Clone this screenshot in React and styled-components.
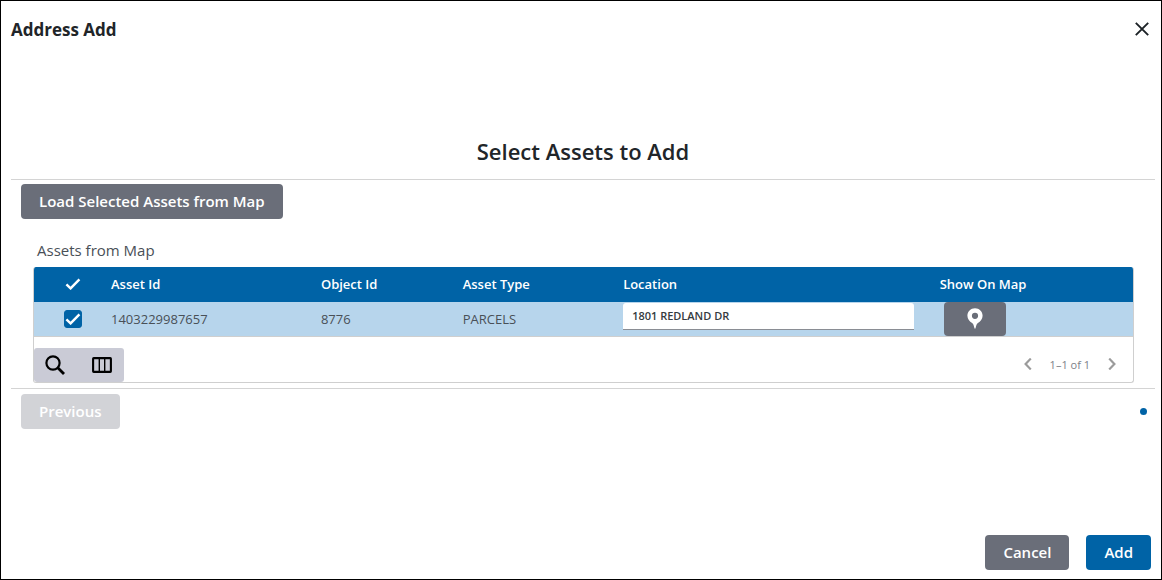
import React, { useState } from "react";
import styled, { createGlobalStyle } from "styled-components";

const assets = [
  {
    assetId: "1403229987657",
    objectId: "8776",
    type: "PARCELS",
    location: "1801 REDLAND DR",
  },
];

const CloseIcon = () => (
  <svg width="14" height="14" viewBox="0 0 14 14" fill="none" stroke="#1c2226" strokeWidth="1.9">
    <path d="M0.8 0.8l12.4 12.4M13.2 0.8L0.8 13.2" />
  </svg>
);

const CheckIcon = () => (
  <svg width="16" height="12" viewBox="0 0 16 12" fill="none" stroke="#fff" strokeWidth="2.4">
    <path d="M1.4 6.4l4.2 4L14.4 1.3" />
  </svg>
);

const SearchIcon = () => (
  <svg width="20" height="20" viewBox="0 0 20 20" fill="none" stroke="#000" strokeWidth="2.2">
    <circle cx="8" cy="8" r="6.6" />
    <path d="M12.8 12.8L19 19" strokeWidth="2.8" />
  </svg>
);

const ColumnsIcon = () => (
  <svg width="20" height="16" viewBox="0 0 20 16" fill="none" stroke="#000">
    <rect x="1.1" y="1.1" width="17.8" height="13.8" rx="0.6" strokeWidth="2.1" />
    <path d="M7.3 2v12M12.7 2v12" strokeWidth="1.4" />
  </svg>
);

const PinIcon = () => (
  <svg width="16" height="21" viewBox="0 0 16 21" fill="#fff" fillRule="evenodd">
    <path d="M8 0.3C3.7 0.3 0.4 3.6 0.4 7.8c0 3.4 2.2 5.7 4.7 7.1 1.2 0.7 1.7 2.5 2.3 5.2 0.2 0.7 1 0.7 1.2 0 0.6-2.7 1.1-4.5 2.3-5.2 2.5-1.4 4.7-3.7 4.7-7.1C15.6 3.6 12.3 0.3 8 0.3zM8 4.7a3.1 3.1 0 1 1 0 6.2 3.1 3.1 0 0 1 0-6.2z" />
  </svg>
);

const ChevronIcon = ({ d }) => (
  <svg width="8" height="12" viewBox="0 0 8 12" fill="none" stroke="#9b9b9b" strokeWidth="2.2">
    <path d={d} />
  </svg>
);

const App = () => {
  const [selected, setSelected] = useState(true);

  return (
    <Dialog role="dialog" aria-labelledby="dialog-title">
      <GlobalStyle />
      <Header>
        <Title id="dialog-title">Address Add</Title>
        <CloseButton type="button" aria-label="Close">
          <CloseIcon />
        </CloseButton>
      </Header>

      <Content>
        <StepTitle>Select Assets to Add</StepTitle>
        <Step>
          <Button type="button">Load Selected Assets from Map</Button>
          <GridSection>
            <GridLabel id="grid-label">Assets from Map</GridLabel>
            <Grid>
              <Table aria-labelledby="grid-label">
                <thead>
                  <tr>
                    <HeadCell $width="69px" $center aria-label="Selected">
                      <CheckIcon />
                    </HeadCell>
                    <HeadCell $width="19.1%">Asset Id</HeadCell>
                    <HeadCell $width="12.9%">Object Id</HeadCell>
                    <HeadCell $width="14.6%">Asset Type</HeadCell>
                    <HeadCell $width="28.8%">Location</HeadCell>
                    <HeadCell>Show On Map</HeadCell>
                  </tr>
                </thead>
                <tbody>
                  {assets.map((asset) => (
                    <Row key={asset.assetId}>
                      <Cell $center>
                        <CheckBox>
                          <input
                            type="checkbox"
                            aria-label={`Select ${asset.assetId}`}
                            checked={selected}
                            onChange={() => setSelected(!selected)}
                          />
                          {selected && <CheckIcon />}
                        </CheckBox>
                      </Cell>
                      <Cell>{asset.assetId}</Cell>
                      <Cell>{asset.objectId}</Cell>
                      <Cell>{asset.type}</Cell>
                      <Cell $top>
                        <LocationInput aria-label="Location" defaultValue={asset.location} />
                      </Cell>
                      <Cell>
                        <MapButton type="button" aria-label="Show on map">
                          <PinIcon />
                        </MapButton>
                      </Cell>
                    </Row>
                  ))}
                </tbody>
              </Table>
              <GridFooter>
                <Tools>
                  <IconButton type="button" aria-label="Search">
                    <SearchIcon />
                  </IconButton>
                  <IconButton type="button" aria-label="Columns">
                    <ColumnsIcon />
                  </IconButton>
                </Tools>
                <Pager>
                  <IconButton type="button" aria-label="Previous page">
                    <ChevronIcon d="M6.8 0.6L1.6 6l5.2 5.4" />
                  </IconButton>
                  <span>1–1 of 1</span>
                  <IconButton type="button" aria-label="Next page">
                    <ChevronIcon d="M1.2 0.6L6.4 6l-5.2 5.4" />
                  </IconButton>
                </Pager>
              </GridFooter>
            </Grid>
          </GridSection>
        </Step>
        <StepNav>
          <Button type="button" disabled>
            Previous
          </Button>
          <StepDot />
        </StepNav>
      </Content>

      <Actions>
        <Button type="button">Cancel</Button>
        <Button type="button" $primary>
          Add
        </Button>
      </Actions>
    </Dialog>
  );
};

const GlobalStyle = createGlobalStyle`
  * {
    box-sizing: border-box;
  }

  body {
    margin: 0;
    background: #fff;
    color: #212529;
    font-family: "Open Sans", "Noto Sans", sans-serif;
  }

  button, input {
    font-family: inherit;
  }

  svg {
    display: block;
    flex: none;
  }
`;

const Dialog = styled.div`
  display: flex;
  flex-direction: column;
  min-height: 100vh;
  border: 1px solid #000;
`;

const Header = styled.header`
  display: flex;
  align-items: center;
  justify-content: space-between;
  height: 57px;
  padding: 0 8px 0 10px;
`;

const Title = styled.h1`
  margin: 0;
  font-size: 17px;
  font-weight: 700;
  line-height: 24px;
`;

const CloseButton = styled.button`
  padding: 4px 4px 6px;
  border: 0;
  background: none;
  cursor: pointer;
`;

const Content = styled.main`
  flex: 1;
  padding: 77px 6px 0 10px;
`;

const StepTitle = styled.h2`
  margin: 0;
  font-size: 22px;
  font-weight: 600;
  line-height: 32px;
  text-align: center;
`;

const Step = styled.section`
  margin-top: 12px;
  padding: 4px 10px 5px;
  border-top: 1px solid #d4d4d4;
  border-bottom: 1px solid #d4d4d4;
`;

const Button = styled.button`
  height: 35px;
  padding: 0 18px 1px;
  border: 0;
  border-radius: 4px;
  background: ${(props) => (props.$primary ? "#0063a6" : "#6a6e79")};
  color: #fff;
  font-size: 15px;
  font-weight: 600;
  line-height: 24px;
  cursor: pointer;

  &:disabled {
    background: #d2d3d7;
    cursor: default;
  }
`;

const GridSection = styled.div`
  padding: 19px 11px 0 12px;
`;

const GridLabel = styled.div`
  padding: 0 4px 5px;
  color: #495057;
  font-size: 15px;
  line-height: 24px;
`;

const Grid = styled.div`
  border: 1px solid #cfcfcf;
  border-top: 0;
  border-radius: 3px;
  overflow: hidden;
`;

const Table = styled.table`
  width: 100%;
  table-layout: fixed;
  border-collapse: separate;
  border-spacing: 0;
  font-size: 13px;
  line-height: 20px;
`;

const HeadCell = styled.th`
  width: ${(props) => props.$width || "auto"};
  height: 35px;
  padding: ${(props) => (props.$center ? "0 0 1px 8px" : "0 8px 1px")};
  background: #0063a6;
  color: #fff;
  font-weight: 600;
  text-align: left;

  svg {
    margin: 0 auto;
  }
`;

const Row = styled.tr`
  background: #b7d5ec;
`;

const Cell = styled.td`
  height: 35px;
  padding: ${(props) => (props.$center ? "0 0 0 8px" : "0 8px")};
  padding-top: ${(props) => (props.$top ? "1px" : "0")};
  border-bottom: 1px solid #cfcfcf;
  color: #495057;
  vertical-align: ${(props) => (props.$top ? "top" : "middle")};
`;

const CheckBox = styled.label`
  display: grid;
  place-items: center;

  input,
  svg {
    grid-area: 1 / 1;
  }

  input {
    appearance: none;
    width: 18px;
    height: 18px;
    margin: 0;
    border: 1px solid #0063a6;
    border-radius: 3px;
    background: #fff;
  }

  input:checked {
    background: #0063a6;
  }

  svg {
    pointer-events: none;
  }
`;

const LocationInput = styled.input`
  display: block;
  width: calc(100% - 10px);
  height: 27px;
  padding: 0 9px 2px;
  border: 0;
  border-bottom: 1px solid #8a8d94;
  border-radius: 3px 3px 0 0;
  background: #fff;
  color: #343a40;
  font-size: 11px;
  font-weight: 600;
`;

const MapButton = styled.button`
  display: flex;
  align-items: center;
  justify-content: center;
  width: 62px;
  height: 34px;
  margin-left: 4px;
  padding: 0 0 2px;
  border: 0;
  border-radius: 4px;
  background: #6a6e79;
  cursor: pointer;
`;

const GridFooter = styled.div`
  display: flex;
  align-items: flex-end;
  justify-content: space-between;
  height: 45px;
`;

const Tools = styled.div`
  display: flex;
  align-items: center;
  justify-content: space-between;
  width: 90px;
  height: 34px;
  padding: 0 12px 1px 11px;
  border-radius: 3px;
  background: #cacbd6;
`;

const IconButton = styled.button`
  padding: 0;
  border: 0;
  background: none;
  cursor: pointer;
`;

const Pager = styled.div`
  display: flex;
  align-items: center;
  gap: 18px;
  height: 34px;
  padding: 0 17px 2px 0;
  color: #7d8088;
  font-size: 11px;
`;

const StepNav = styled.div`
  display: flex;
  align-items: center;
  justify-content: space-between;
  padding: 5px 8px 0 10px;
`;

const StepDot = styled.span`
  width: 7px;
  height: 7px;
  border-radius: 50%;
  background: #0063a6;
`;

const Actions = styled.footer`
  display: flex;
  justify-content: flex-end;
  gap: 17px;
  padding: 0 10px 9px;
`;

export default App;
